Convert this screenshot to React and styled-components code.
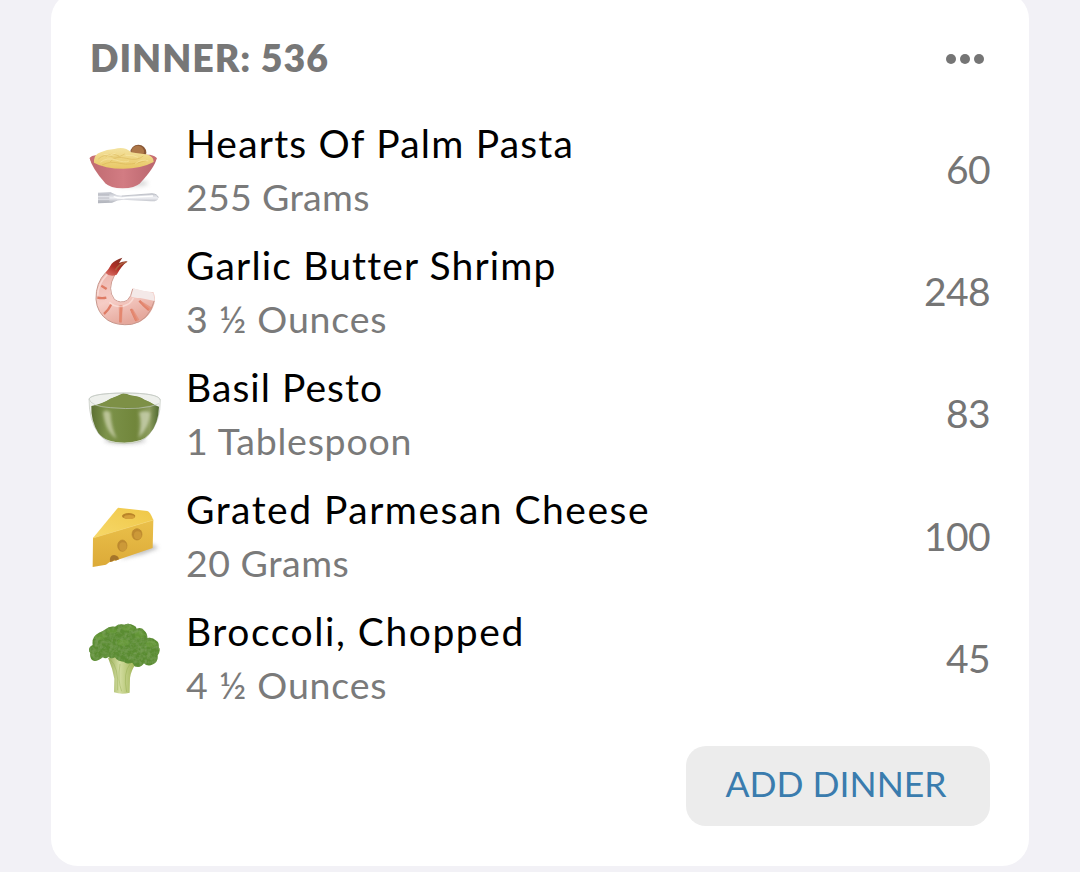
import React from "react";
import styled, { createGlobalStyle } from "styled-components";

const Global = createGlobalStyle`
  * { box-sizing: border-box; }
  body { margin: 0; background: #f2f1f6; }
`;

const Page = styled.main`
  height: 872px;
  padding: 0 51px 6px;
  overflow: hidden;
  font-family: Lato, "Open Sans", sans-serif;
`;

const Card = styled.section`
  height: 874px;
  margin-top: -8px;
  padding: 8px 39px 0 29px;
  border-radius: 27px;
  background: #fff;
`;

const Header = styled.header`
  display: flex;
  align-items: center;
  justify-content: space-between;
  height: 108px;
  padding: 8px 6px 0 10px;
`;

const Heading = styled.h2`
  margin: 0;
  height: 108px;
  font-size: 37.5px;
  line-height: 107px;
  font-weight: 800;
  letter-spacing: ${(p) => p.$spacing}px;
  color: #777;
`;

const MoreButton = styled.button`
  display: flex;
  gap: 4px;
  padding: 0;
  margin-top: 2px;
  border: 0;
  background: none;
`;

const Dot = styled.span`
  width: 10px;
  height: 10px;
  border-radius: 50%;
  background: #757575;
`;

const List = styled.ul`
  margin: 0;
  padding: 0;
  list-style: none;
`;

const Row = styled.li`
  display: flex;
  height: 122.2px;
`;

const FoodIcon = styled.svg`
  flex: none;
  width: 90px;
  height: 122px;
`;

const Details = styled.div`
  flex: 1;
  padding: 7.7px 0 0 16px;
  white-space: nowrap;
`;

const Name = styled.div`
  font-size: 39px;
  line-height: 54px;
  letter-spacing: ${(p) => p.$spacing}px;
  color: #000;
`;

const Amount = styled.div`
  font-size: 37.5px;
  line-height: 54px;
  letter-spacing: ${(p) => p.$spacing}px;
  color: #7a7a7a;
`;

const Calories = styled.div`
  font-size: 39px;
  line-height: 122px;
  letter-spacing: -0.6px;
  color: #757575;
`;

const Footer = styled.footer`
  display: flex;
  justify-content: flex-end;
  padding-top: 27px;
`;

const AddButton = styled.button`
  width: 304px;
  height: 80px;
  padding: 0 4px 4px 0;
  border: 0;
  border-radius: 20px;
  background: #ececec;
  color: #3a7cae;
  font-family: inherit;
  font-size: 35.5px;
  letter-spacing: ${(p) => p.$spacing}px;
`;

function Pasta() {
  return (
    <FoodIcon viewBox="0 0 270 366">
      <defs>
        <linearGradient id="bowl" x1="0" x2="1">
          <stop offset="0" stopColor="#bf6a70" />
          <stop offset=".5" stopColor="#d27c83" />
          <stop offset="1" stopColor="#b9656d" />
        </linearGradient>
        <linearGradient id="noodles" x2="0" y2="1">
          <stop stopColor="#f4e3a0" />
          <stop offset="1" stopColor="#e8c765" />
        </linearGradient>
        <linearGradient id="steel" x2="0" y2="1">
          <stop stopColor="#b9bcc5" />
          <stop offset=".5" stopColor="#eff0f4" />
          <stop offset="1" stopColor="#a9acb5" />
        </linearGradient>
        <filter id="soft" x="-30%" y="-60%" width="160%" height="220%">
          <feGaussianBlur stdDeviation="6" />
        </filter>
      </defs>
      <g transform="translate(0 66)">
        <ellipse cx="150" cy="160" rx="54" ry="11" fill="#c9c9c9" opacity=".7" filter="url(#soft)" />
        <path d="M29 84Q128 55 230 84Q226 110 180 160Q165 175 128 175Q90 175 76 160Q34 112 29 84Z" fill="url(#bowl)" />
        <path d="M29 84Q33 77 51 75L210 74Q227 78 230 84Q229 93 221 97Q132 125 41 99Q30 93 29 84Z" fill="#c76e73" />
        <circle cx="175" cy="68" r="24" fill="#8a5836" />
        <circle cx="173" cy="66" r="19" fill="#ad7748" />
        <path d="M42 90Q43 74 62 67Q80 58 103 57Q133 47 154 67Q182 72 199 73Q222 79 221 96Q184 116 130 116Q73 116 42 98Z" fill="url(#noodles)" />
        <g fill="none" strokeWidth="2.3" opacity=".5">
          <path stroke="#d0a845" d="M55 87q17-16 36-8t43-7M90 96q17-20 49-11t51-7M66 105q24-13 54-5t81-9M117 78q-25-11-40 2" />
          <path stroke="#fff3be" d="M71 73q17 7 35-3M61 97q19-16 46-7t40 3M137 76q23-2 37 6M166 101q20-16 39-8" />
        </g>
        <path d="M54 188L92 187Q112 199 132 198L216 191Q235 193 235 204Q234 215 213 214L141 210Q117 207 96 218L54 220Z" fill="url(#steel)" />
        <path d="M54 195H88M54 204H88M54 213H88" stroke="#a9acb4" strokeWidth="2.5" />
        <path d="M101 200Q120 207 137 203L219 198" stroke="#fff" strokeWidth="4" fill="none" />
        <path d="M125 198L216 191Q232 192 235 203" stroke="#acafb8" strokeWidth="2" fill="none" />
      </g>
    </FoodIcon>
  );
}

function Shrimp() {
  return (
    <FoodIcon viewBox="0 0 270 366">
      <defs>
        <linearGradient id="shrimpBody" x1="0" y1="0" x2=".4" y2="1">
          <stop stopColor="#ecb3aa" />
          <stop offset=".55" stopColor="#f6cdc6" />
          <stop offset="1" stopColor="#e5a89c" />
        </linearGradient>
        <linearGradient id="tail" x1=".8" y1="0" x2=".2" y2="1">
          <stop stopColor="#7c3023" />
          <stop offset=".55" stopColor="#b02f26" />
          <stop offset="1" stopColor="#d76a61" />
        </linearGradient>
      </defs>
      <g transform="translate(0 59)">
        <path d="M77 69Q47 99 48 149Q51 190 84 212Q112 229 155 224Q206 214 223 162Q227 142 220 127Q194 128 158 116Q154 141 142 153Q121 164 103 150Q78 121 105 75Z" fill="url(#shrimpBody)" />
        <path d="M77 69Q47 99 48 149Q51 190 84 212Q112 229 155 224Q206 214 223 153" fill="none" stroke="#c7968b" strokeWidth="3" />
        <path d="M158 116Q189 124 220 129L224 154L181 145Q161 145 151 139Z" fill="#f4e9e8" />
        <path d="M64 108Q73 113 80 118M52 144Q67 147 79 144M72 193Q86 181 94 164M121 218Q122 196 124 168M169 213Q160 194 153 178M207 181Q190 167 178 153" stroke="#df7c65" strokeWidth="7" fill="none" />
        <path d="M116 167Q120 166 128 167L126 218H118M151 181L159 178L178 210L168 216M179 151L216 174L208 183L184 163" fill="#e58c74" opacity=".7" />
        <path d="M53 138Q53 103 82 74M88 158Q104 173 127 170Q153 164 160 145" stroke="#fff2ee" strokeWidth="5" fill="none" opacity=".5" />
        <path d="M104 76Q80 119 103 149Q121 163 142 152Q154 141 158 118" stroke="#cf9c92" strokeWidth="3" fill="none" />
        <path d="M76 69Q87 57 95 42Q105 31 127 24L117 40Q126 36 143 35Q126 47 110 75Q91 84 76 69Z" fill="url(#tail)" />
        <path d="M106 62Q117 42 139 37" stroke="#ad5f3d" strokeWidth="5" fill="none" />
      </g>
    </FoodIcon>
  );
}

function Pesto() {
  return (
    <FoodIcon viewBox="0 0 270 366">
      <defs>
        <linearGradient id="pesto" x1="0" x2="1">
          <stop stopColor="#5c7033" />
          <stop offset=".22" stopColor="#7c924a" />
          <stop offset=".65" stopColor="#71863b" />
          <stop offset=".86" stopColor="#8c9c5e" />
          <stop offset="1" stopColor="#4f6930" />
        </linearGradient>
        <filter id="gloss" x="-40%" y="-20%" width="180%" height="140%">
          <feGaussianBlur stdDeviation="5" />
        </filter>
      </defs>
      <g transform="translate(0 83)">
        <ellipse cx="135" cy="182" rx="62" ry="10" fill="#aaa" opacity=".7" filter="url(#soft)" />
        <path d="M27 58Q32 41 133 40Q238 40 241 61Q242 123 207 165Q188 191 133 192Q76 192 56 162Q27 124 27 58Z" fill="#eef0ec" stroke="#bfc4bc" strokeWidth="2" />
        <path d="M34 79Q68 72 91 57Q114 48 126 42Q137 40 151 47Q179 50 193 60Q207 65 224 76L237 81Q236 132 208 163Q187 189 133 189Q77 189 55 160Q32 123 34 79Z" fill="url(#pesto)" />
        <path d="M42 78Q68 73 92 57Q116 49 129 42Q141 43 151 48Q178 50 193 60Q208 65 224 76Q131 91 42 78Z" fill="#7d9046" />
        <path d="M69 97Q81 89 91 98Q94 145 110 177Q77 159 69 97Z" fill="#d5d9b8" opacity=".7" filter="url(#gloss)" />
        <path d="M177 99Q195 91 211 99Q209 142 176 174Q187 128 177 99Z" fill="#d6dbc0" opacity=".7" filter="url(#gloss)" />
        <path d="M86 187Q134 195 182 185" stroke="#c9d0bc" strokeWidth="2" fill="none" />
        <path d="M27 58Q33 80 91 84Q188 93 237 72M27 58Q34 41 134 40Q235 40 241 61" stroke="#c3c9c2" strokeWidth="2" fill="none" />
      </g>
    </FoodIcon>
  );
}

function Cheese() {
  return (
    <FoodIcon viewBox="0 0 270 366">
      <defs>
        <linearGradient id="cheeseTop" x1="1" y1="0" x2="0" y2="1">
          <stop stopColor="#efc747" />
          <stop offset="1" stopColor="#f7d869" />
        </linearGradient>
        <linearGradient id="cheeseSide" x2="0" y2="1">
          <stop stopColor="#eac04a" />
          <stop offset="1" stopColor="#dcaa38" />
        </linearGradient>
      </defs>
      <g transform="translate(0 61)">
        <path d="M125 185L214 146L236 157L190 175L125 190Z" fill="#aaa" opacity=".8" filter="url(#soft)" />
        <path d="M39 128L114 37L202 47Q210 49 220 74Z" fill="url(#cheeseTop)" />
        <path d="M39 128L220 74L218 158L112 194L88 201L78 208L38 215Z" fill="url(#cheeseSide)" />
        <path d="M39 128L220 74" stroke="#f5d365" strokeWidth="2" />
        <path d="M90 200Q87 180 102 179Q115 180 117 192L107 196Q104 190 98 198Z" fill="#a5752a" />
        <ellipse cx="146" cy="62" rx="20" ry="9" fill="#b98428" />
        <ellipse cx="148" cy="65" rx="16" ry="6" fill="#d5a039" />
        <g stroke="#b8862e" strokeWidth="2" fill="#bd8930">
          <ellipse cx="127" cy="151" rx="14" ry="17" />
          <ellipse cx="171" cy="117" rx="15" ry="17" />
        </g>
        <ellipse cx="129" cy="154" rx="11" ry="13" fill="#cc9938" />
        <ellipse cx="173" cy="120" rx="11" ry="12" fill="#cc9938" />
      </g>
    </FoodIcon>
  );
}

function Broccoli() {
  return (
    <FoodIcon viewBox="0 0 270 366">
      <defs>
        <linearGradient id="stem" x1="0" x2="1">
          <stop stopColor="#9aae5b" />
          <stop offset=".4" stopColor="#d3dda0" />
          <stop offset="1" stopColor="#9bb04f" />
        </linearGradient>
        <filter id="leafy" x="-5%" y="-5%" width="110%" height="110%">
          <feTurbulence type="fractalNoise" baseFrequency=".09" numOctaves="3" seed="4" result="noise" />
          <feColorMatrix in="noise" type="matrix" values="0 0 0 0 .17  0 0 0 0 .33  0 0 0 0 .08  1.8 1.8 0 0 -1.45" result="specks" />
          <feComposite in="specks" in2="SourceAlpha" operator="in" result="shade" />
          <feMerge>
            <feMergeNode in="SourceGraphic" />
            <feMergeNode in="shade" />
          </feMerge>
        </filter>
      </defs>
      <g transform="translate(0 55)">
        <path d="M84 127Q98 160 103 190L102 231Q125 239 149 232L150 188Q153 164 170 143L158 118Z" fill="url(#stem)" />
        <path d="M90 132Q117 154 113 225M120 146Q112 196 125 228M151 145Q128 172 140 230" stroke="#91aa4c" strokeWidth="3" fill="none" opacity=".4" />
        <path d="M69 125Q45 144 34 132Q29 124 31 113Q20 99 38 89Q34 64 57 52Q69 48 78 41Q87 31 105 34Q117 24 133 28Q147 22 160 30Q170 34 170 40Q185 34 194 47Q202 54 202 68Q217 64 229 76Q237 80 236 94Q243 107 233 120Q235 140 219 147Q203 156 192 144Q181 160 164 153L157 142Q140 148 131 139Q114 139 105 126Q92 132 86 124Q75 133 69 125Z" fill="#5a8c30" filter="url(#leafy)" />
        <g fill="#79ae43" opacity=".3">
          <ellipse cx="60" cy="64" rx="16" ry="9" />
          <ellipse cx="95" cy="47" rx="16" ry="7" />
          <ellipse cx="144" cy="39" rx="20" ry="8" />
          <ellipse cx="179" cy="58" rx="15" ry="11" />
          <ellipse cx="213" cy="86" rx="16" ry="10" />
          <ellipse cx="129" cy="82" rx="20" ry="10" />
        </g>
      </g>
    </FoodIcon>
  );
}

const foods = [
  { icon: Pasta, name: "Hearts Of Palm Pasta", amount: "255 Grams", calories: 60, nameSpacing: 1.2, amountSpacing: 0.3 },
  { icon: Shrimp, name: "Garlic Butter Shrimp", amount: "3 ½ Ounces", calories: 248, nameSpacing: 1.15, amountSpacing: 0.8 },
  { icon: Pesto, name: "Basil Pesto", amount: "1 Tablespoon", calories: 83, nameSpacing: 1.05, amountSpacing: 0.75 },
  { icon: Cheese, name: "Grated Parmesan Cheese", amount: "20 Grams", calories: 100, nameSpacing: 1.5, amountSpacing: 0.5 },
  { icon: Broccoli, name: "Broccoli, Chopped", amount: "4 ½ Ounces", calories: 45, nameSpacing: 1.55, amountSpacing: 0.8 },
];

export default function App() {
  return (
    <>
      <Global />
      <Page>
        <Card>
          <Header>
            <Heading $spacing={0.95}>DINNER: 536</Heading>
            <MoreButton aria-label="More options">
              <Dot />
              <Dot />
              <Dot />
            </MoreButton>
          </Header>
          <List>
            {foods.map(({ icon: Icon, ...food }) => (
              <Row key={food.name}>
                <Icon />
                <Details>
                  <Name $spacing={food.nameSpacing}>{food.name}</Name>
                  <Amount $spacing={food.amountSpacing}>{food.amount}</Amount>
                </Details>
                <Calories>{food.calories}</Calories>
              </Row>
            ))}
          </List>
          <Footer>
            <AddButton $spacing={0}>ADD DINNER</AddButton>
          </Footer>
        </Card>
      </Page>
    </>
  );
}
